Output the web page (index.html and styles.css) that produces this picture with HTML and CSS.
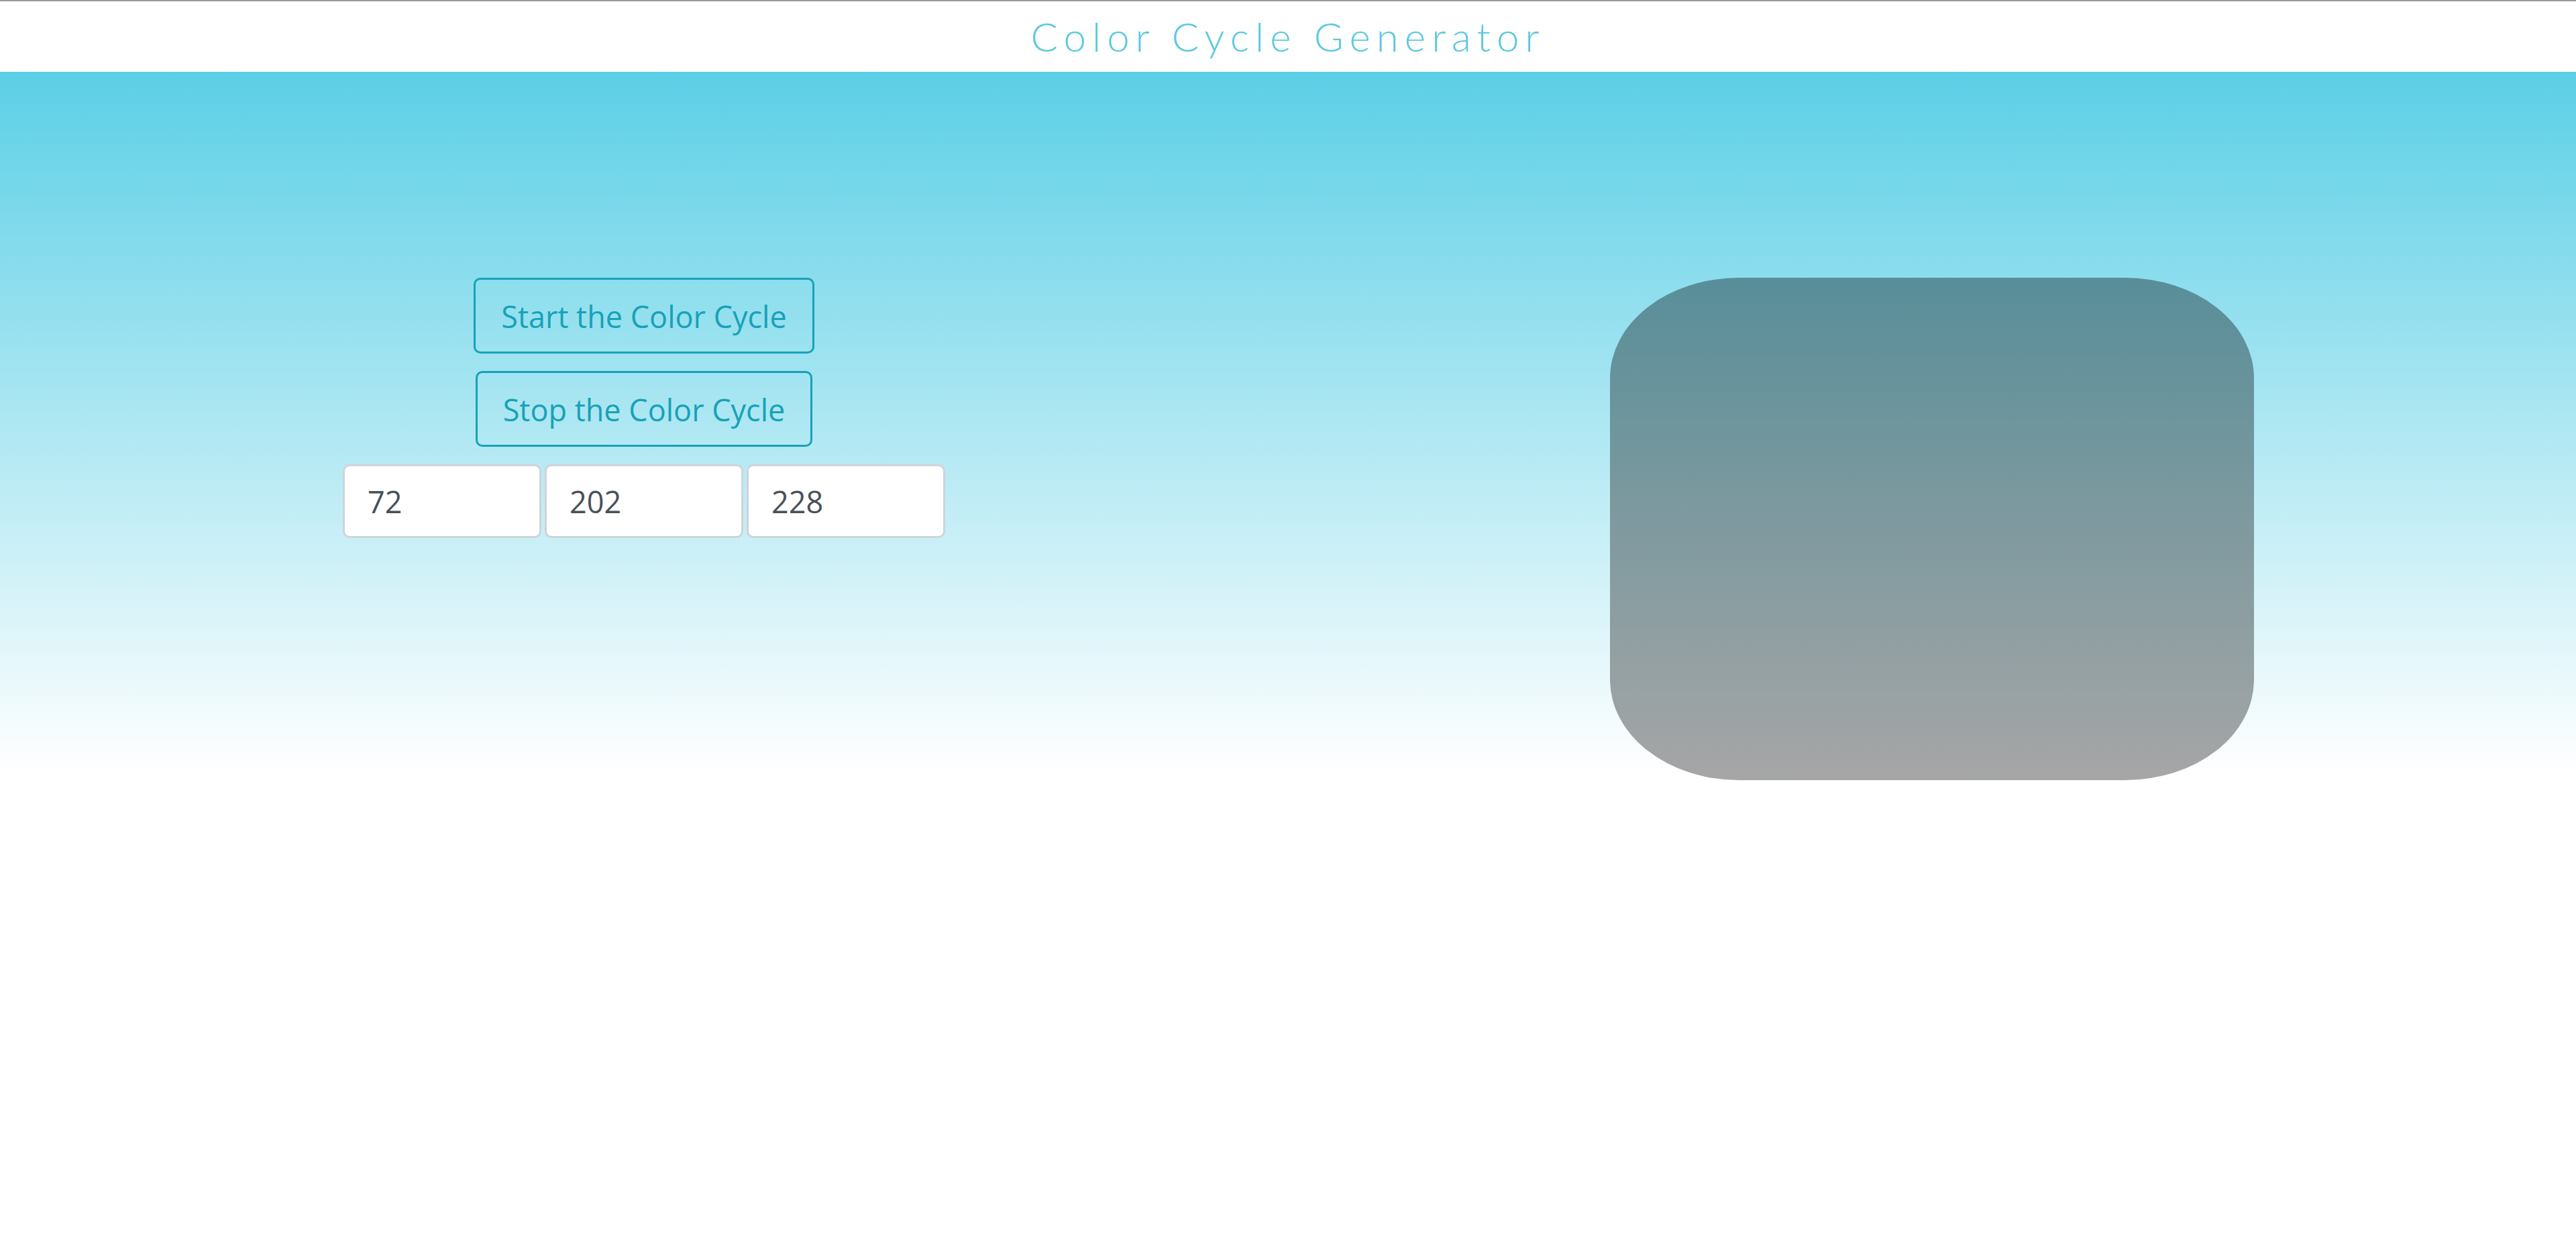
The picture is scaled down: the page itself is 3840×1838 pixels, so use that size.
FILE: index.html
```html
<!DOCTYPE html>
<html lang="en">
<head>
<meta charset="utf-8">
<title>Color Cycle Generator</title>
<link rel="stylesheet" href="styles.css">
</head>
<body>
<header class="topbar">
  <h1 class="title">Color Cycle Generator</h1>
</header>
<main class="stage">
  <section class="controls">
    <button class="btn" type="button">Start the Color Cycle</button>
    <button class="btn" type="button">Stop the Color Cycle</button>
    <div class="rgb">
      <input class="field" type="text" value="72">
      <input class="field" type="text" value="202">
      <input class="field" type="text" value="228">
    </div>
  </section>
  <section class="preview">
    <div class="swatch"></div>
  </section>
</main>
</body>
</html>
```
FILE: styles.css
```css
html, body {
  margin: 0;
  padding: 0;
  background: #ffffff;
}

body {
  font-family: "Open Sans", "Noto Sans", sans-serif;
}

.topbar {
  border-top: 2px solid #9a9a9a;
  height: 105px;
  display: flex;
  align-items: center;
  justify-content: center;
  background: #ffffff;
}

.title {
  margin: 0;
  font-family: "Lato", "Open Sans", sans-serif;
  font-weight: 300;
  font-size: 60px;
  letter-spacing: 9px;
  color: #5bc8df;
  line-height: 1;
  padding-bottom: 2px;
}

.stage {
  min-height: 1731px;
  background: linear-gradient(to bottom, #5bcfe6 0%, #ffffff 100%) top left / 100% 1043px no-repeat;
  display: grid;
  grid-template-columns: 1fr 1fr;
  align-items: start;
  padding-top: 307px;
  box-sizing: border-box;
}

.controls {
  display: flex;
  flex-direction: column;
  align-items: center;
  gap: 26px;
}

.btn {
  font-family: "Open Sans", "Noto Sans", sans-serif;
  font-size: 45px;
  line-height: 1.5;
  color: #17a2b8;
  background: transparent;
  border: 3px solid #17a2b8;
  border-radius: 10px;
  padding: 17px 38px 15px;
  height: 113px;
  box-sizing: border-box;
}

.rgb {
  display: flex;
  gap: 5px;
}

.field {
  width: 296px;
  height: 110px;
  box-sizing: border-box;
  border: 3px solid #ced4da;
  border-radius: 10px;
  padding: 0 34px;
  font-family: "Open Sans", "Noto Sans", sans-serif;
  font-size: 45px;
  color: #495057;
  background: #ffffff;
}

.preview {
  display: flex;
  justify-content: center;
}

.swatch {
  width: 960px;
  height: 749px;
  border-radius: 20%;
  background: linear-gradient(to bottom, #588e99 0%, #a6a6a6 100%);
}
```
